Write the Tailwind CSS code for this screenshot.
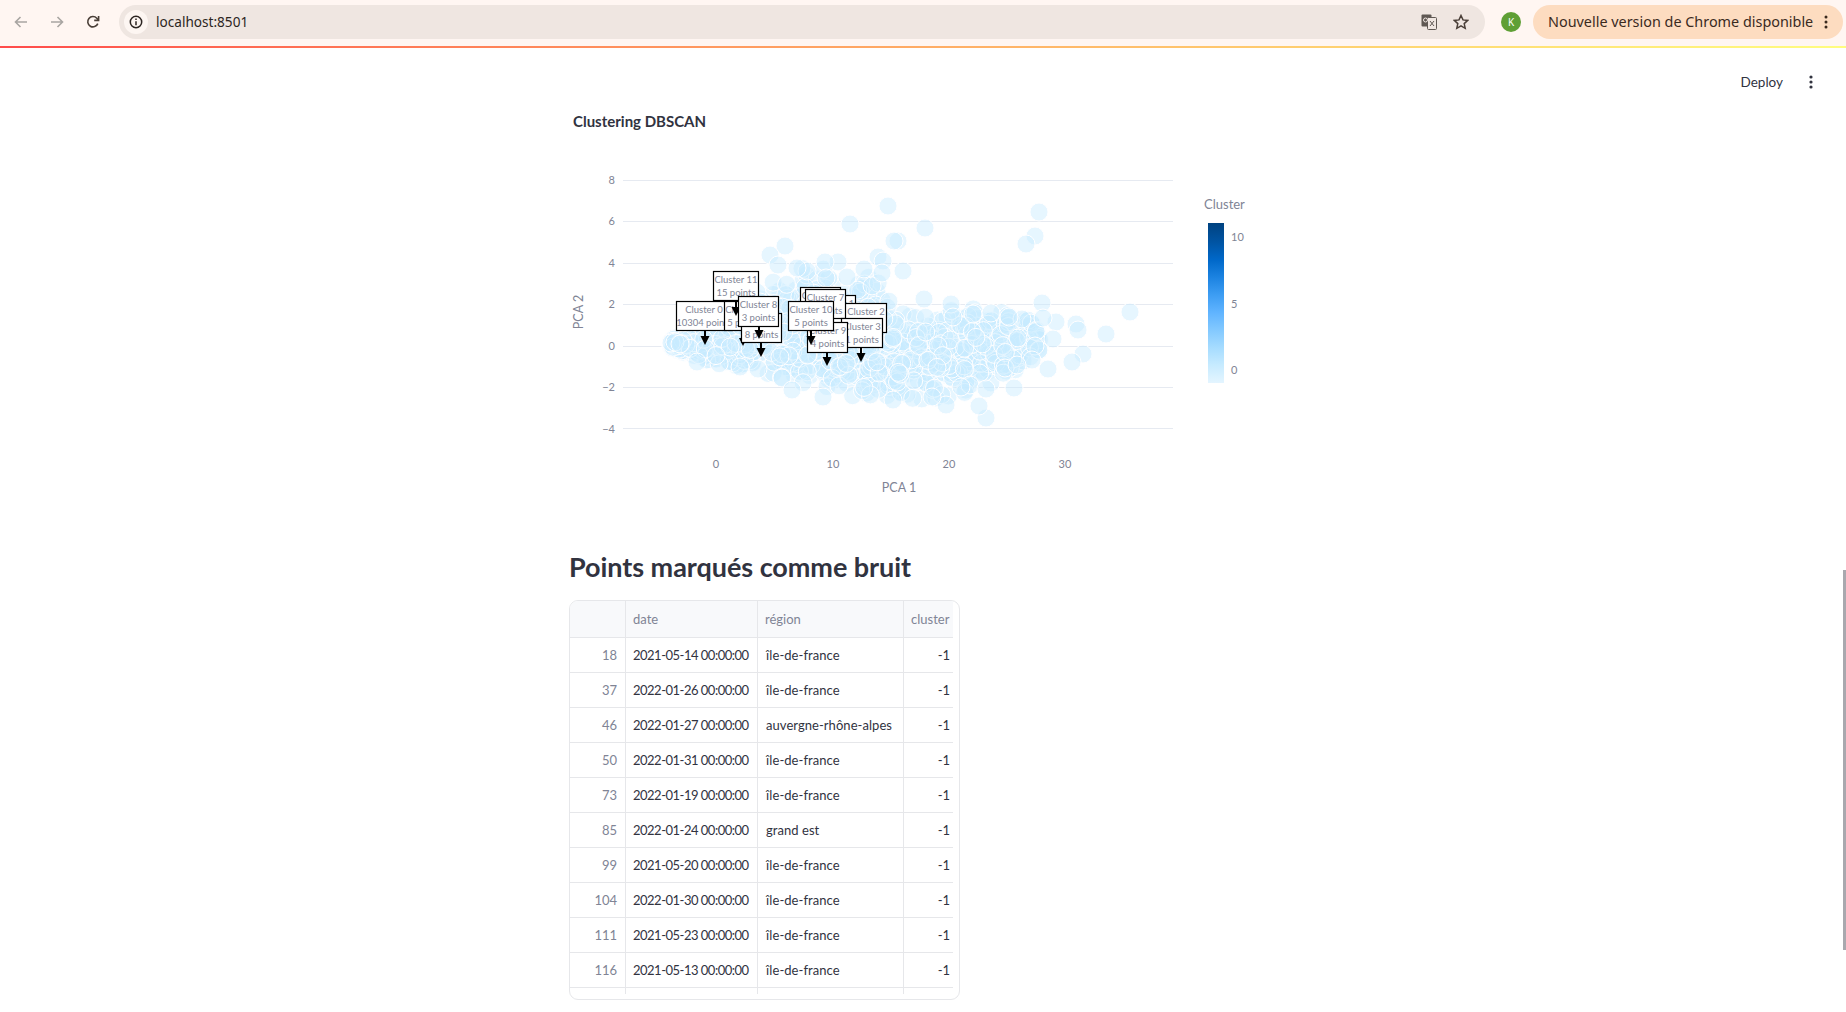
<!DOCTYPE html>
<html lang="fr">
<head>
    <meta charset="UTF-8">
    <title>localhost:8501</title>
    <script src="https://cdn.jsdelivr.net/npm/@tailwindcss/browser@4"></script>
</head>
<body class="bg-white h-screen overflow-hidden relative font-['Lato',sans-serif] text-[#31333f]">
    <!-- Browser toolbar -->
    <div class="h-[46px] bg-[#fff6f2] flex items-start pt-[5px] font-['Noto_Sans',sans-serif]">
        <div class="w-[119px] h-[34px] flex items-center shrink-0">
            <svg class="ml-[14px] w-[14px] h-[12px]" viewBox="0 0 14 12" fill="none" stroke="#a9a5a2" stroke-width="1.6"><path d="M13 6H2M6.5 1 1.5 6l5 5"/></svg>
            <svg class="ml-[22px] w-[14px] h-[12px]" viewBox="0 0 14 12" fill="none" stroke="#a9a5a2" stroke-width="1.6"><path d="M1 6h11M7.5 1l5 5-5 5"/></svg>
            <svg class="ml-[22px] w-[14px] h-[14px]" viewBox="0 0 14 14" fill="none" stroke="#4a3f38" stroke-width="1.6"><path d="M11.8 8.6A5.2 5.2 0 1 1 10.8 3.2L12.4 5"/><path d="M12.6 1v4.4H8.2" /></svg>
        </div>
        <div class="w-[1366px] h-[34px] bg-[#efe6e1] rounded-full flex items-center shrink-0">
            <div class="ml-[5px] w-[24px] h-[24px] rounded-full bg-[#fdf6f2] flex items-center justify-center">
                <svg class="w-[14px] h-[14px]" viewBox="0 0 14 14" fill="none" stroke="#2c2522" stroke-width="1.5"><circle cx="7" cy="7" r="5.7"/><path d="M7 6.2v4M7 3.6v1.4"/></svg>
            </div>
            <span class="ml-[8px] text-[13.6px] text-[#2c2522] leading-[32px] -mt-[1px]">localhost:8501</span>
            <div class="ml-auto flex items-center gap-[16px] mr-[16px]">
                <svg class="w-[16px] h-[16px]" viewBox="0 0 16 16"><rect x="0.5" y="0.5" width="10" height="12" rx="1" fill="#5f5853"/><rect x="6.5" y="3.5" width="9" height="12" rx="1" fill="#efe6e1" stroke="#5f5853"/><path d="M9 7l4 5M13 7l-4 5" stroke="#5f5853" fill="none"/><circle cx="4.5" cy="6" r="2" fill="none" stroke="#efe6e1"/></svg>
                <svg class="w-[16px] h-[16px]" viewBox="0 0 16 16" fill="none" stroke="#4a3f38" stroke-width="1.5"><path d="M8 1.5l2 4.4 4.7.5-3.5 3.2 1 4.7L8 11.9 3.8 14.3l1-4.7L1.300 6.400l4.700-.5z"/></svg>
            </div>
        </div>
        <div class="ml-[16px] mt-[7px] w-[20px] h-[20px] rounded-full bg-[#5f9f35] text-white text-[10px] flex items-center justify-center shrink-0">K</div>
        <div class="ml-[12px] w-[310px] h-[34px] bg-[#fddcc0] rounded-full flex items-center pl-[15px] shrink-0">
            <span class="text-[14.4px] text-[#3a2a1e] whitespace-nowrap">Nouvelle version de Chrome disponible</span>
            <svg class="ml-auto mr-[15px] w-[4px] h-[14px]" viewBox="0 0 4 14" fill="#3a2a1e"><circle cx="2" cy="2" r="1.500"/><circle cx="2" cy="7" r="1.500"/><circle cx="2" cy="12" r="1.500"/></svg>
        </div>
    </div>
    <div class="h-[2px] bg-gradient-to-r from-[#ff4b4b] to-[#fffd80]"></div>

    <!-- Streamlit header -->
    <div class="h-[44px] flex items-center justify-end pr-[33px] pt-[24px]">
        <span class="text-[13.5px]">Deploy</span>
        <svg class="ml-[26px] w-[4px] h-[14px]" viewBox="0 0 4 14" fill="#31333f"><circle cx="2" cy="2" r="1.600"/><circle cx="2" cy="7" r="1.600"/><circle cx="2" cy="12" r="1.600"/></svg>
    </div>

    <main class="ml-[569px] w-[720px]">
        <div class="mt-[19px] ml-[4px] text-[15px] font-bold leading-[20px]">Clustering DBSCAN</div>

        <!-- viewBox uses page coordinates so points read straight off the screenshot -->
        <svg id="chart" class="block w-[700px] h-[400px]" viewBox="569 131 700 400" font-family="Lato, sans-serif">
            <g stroke="#e6eaf1" stroke-width="1">
                <path d="M623 180.500H1173M623 221.500H1173M623 263.500H1173M623 304.500H1173M623 346.500H1173M623 387.500H1173M623 428.500H1173"/>
            </g>
            <g fill="#808495" font-size="11" text-anchor="end">
                <text x="615" y="184">8</text>
                <text x="615" y="225">6</text>
                <text x="615" y="267">4</text>
                <text x="615" y="308">2</text>
                <text x="615" y="350">0</text>
                <text x="615" y="391">−2</text>
                <text x="615" y="433">−4</text>
            </g>
            <g fill="#808495" font-size="11" text-anchor="middle">
                <text x="716" y="468">0</text>
                <text x="833" y="468">10</text>
                <text x="949" y="468">20</text>
                <text x="1065" y="468">30</text>
            </g>
            <text x="899" y="492" fill="#808495" font-size="12.500" text-anchor="middle">PCA 1</text>
            <text transform="translate(583 312) rotate(-90)" fill="#808495" font-size="12.500" text-anchor="middle">PCA 2</text>

            <g id="points" fill="#c7ebff" fill-opacity="0.45" stroke="#ffffff" stroke-width="1"></g>

            <!-- cluster annotations, back to front -->
            <g font-size="9.500" fill="#808495" text-anchor="middle">
                <g>
                    <path d="M705 330v8" stroke="#000" stroke-width="2"/><path d="M700.500 336h9l-4.500 9z" fill="#000"/>
                    <rect x="676.500" y="301.500" width="56" height="29" fill="#fff" stroke="#000" stroke-width="1.200"/>
                    <text x="704" y="313">Cluster 0</text><text x="704" y="326">10304 points</text>
                </g>
                <g>
                    <path d="M743 330v8" stroke="#000" stroke-width="2"/><path d="M739 338h8l-4 8z" fill="#000"/>
                    <rect x="724.500" y="301.500" width="40" height="29" fill="#fff" stroke="#000" stroke-width="1.200"/>
                    <text x="744" y="313">Cluster 5</text><text x="744" y="326">5 points</text>
                </g>
                <g>
                    <path d="M761 342v8" stroke="#000" stroke-width="2"/><path d="M756.500 348h9l-4.500 9z" fill="#000"/>
                    <rect x="741.500" y="313.500" width="40" height="29" fill="#fff" stroke="#000" stroke-width="1.200"/>
                    <text x="761.500" y="338">8 points</text>
                </g>
                <g>
                    <path d="M736 301v8" stroke="#000" stroke-width="2"/><path d="M731.500 307h9l-4.500 9z" fill="#000"/>
                    <rect x="713.500" y="271.500" width="45" height="29" fill="#fff" stroke="#000" stroke-width="1.200"/>
                    <text x="736" y="283">Cluster 11</text><text x="736" y="296">15 points</text>
                </g>
                <g>
                    <path d="M759 326v6" stroke="#000" stroke-width="2"/><path d="M754.500 330h9l-4.500 9z" fill="#000"/>
                    <rect x="738.500" y="296.500" width="40" height="30" fill="#fff" stroke="#000" stroke-width="1.200"/>
                    <text x="758.500" y="308">Cluster 8</text><text x="758.500" y="321">3 points</text>
                </g>
                <g>
                    <rect x="800.500" y="287.500" width="40" height="29" fill="#fff" stroke="#000" stroke-width="1.200"/>
                    <text x="820.500" y="299">Cluster 6</text>
                    <rect x="815.500" y="295.500" width="40" height="29" fill="#fff" stroke="#000" stroke-width="1.200"/>
                    <text x="835.500" y="307">Cluster 1</text>
                </g>
                <g>
                    <rect x="842.500" y="303.500" width="44" height="29" fill="#fff" stroke="#000" stroke-width="1.200"/>
                    <text x="866" y="315">Cluster 2</text><text x="866" y="328">2 points</text>
                </g>
                <g>
                    <rect x="805.500" y="289.500" width="40" height="29" fill="#fff" stroke="#000" stroke-width="1.200"/>
                    <text x="825.500" y="301">Cluster 7</text><text x="825.500" y="314">3 points</text>
                </g>
                <g>
                    <path d="M861 347v8" stroke="#000" stroke-width="2"/><path d="M856.500 353h9l-4.500 9z" fill="#000"/>
                    <rect x="841.500" y="318.500" width="41" height="29" fill="#fff" stroke="#000" stroke-width="1.200"/>
                    <text x="862" y="330">Cluster 3</text><text x="862" y="343">1 points</text>
                </g>
                <g>
                    <path d="M827 352v7" stroke="#000" stroke-width="2"/><path d="M822.500 357h9l-4.500 9z" fill="#000"/>
                    <rect x="807.500" y="322.500" width="40" height="30" fill="#fff" stroke="#000" stroke-width="1.200"/>
                    <text x="827.500" y="334">Cluster 9</text><text x="827.500" y="347">4 points</text>
                </g>
                <g>
                    <path d="M811 330v8" stroke="#000" stroke-width="2"/><path d="M806.500 336h9l-4.500 9z" fill="#000"/>
                    <rect x="788.500" y="301.500" width="45" height="29" fill="#fff" stroke="#000" stroke-width="1.200"/>
                    <text x="811" y="313">Cluster 10</text><text x="811" y="326">5 points</text>
                </g>
            </g>

            <!-- legend -->
            <defs>
                <linearGradient id="blues" x1="0" y1="1" x2="0" y2="0">
                    <stop offset="0" stop-color="#e4f5ff"/><stop offset="0.11" stop-color="#c7ebff"/><stop offset="0.22" stop-color="#a6dcff"/>
                    <stop offset="0.33" stop-color="#83c9ff"/><stop offset="0.44" stop-color="#60b4ff"/><stop offset="0.55" stop-color="#3d9df3"/>
                    <stop offset="0.66" stop-color="#1c83e1"/><stop offset="0.77" stop-color="#0068c9"/><stop offset="0.88" stop-color="#0054a3"/>
                    <stop offset="1" stop-color="#004280"/>
                </linearGradient>
            </defs>
            <text x="1204" y="209" fill="#808495" font-size="13">Cluster</text>
            <rect x="1208" y="223" width="16" height="160" fill="url(#blues)"/>
            <g fill="#808495" font-size="11">
                <text x="1231" y="241">10</text>
                <text x="1231" y="308">5</text>
                <text x="1231" y="374">0</text>
            </g>
        </svg>

        <h2 class="mt-[18px] text-[27px] font-bold leading-[36px] whitespace-nowrap tracking-[-0.05px]">Points marqués comme bruit</h2>

        <!-- Dataframe -->
        <div class="mt-[15px] w-[391px] h-[400px] border border-[#e6e7ea] rounded-[9px] overflow-hidden text-[13px] leading-[34px]">
            <div class="w-[383px] h-[393px] overflow-hidden">
                <div class="grid grid-cols-[56px_132px_146px_49px] h-[37px] leading-[36px] bg-[#f8f9fb] text-[#808495] border-b border-[#e6e7ea]">
                    <div class="border-r border-[#e6e7ea]"></div>
                    <div class="border-r border-[#e6e7ea] pl-[7px]">date</div>
                    <div class="border-r border-[#e6e7ea] pl-[7px]">région</div>
                    <div class="pl-[7px] whitespace-nowrap overflow-hidden">cluster</div>
                </div>
                <div id="rows"></div>
                <div class="grid grid-cols-[56px_132px_146px_49px] h-[6px]">
                    <div class="border-r border-[#e6e7ea]"></div>
                    <div class="border-r border-[#e6e7ea]"></div>
                    <div class="border-r border-[#e6e7ea]"></div>
                </div>
            </div>
        </div>
    </main>

    <!-- Scrollbar thumb -->
    <div class="absolute right-0 top-[570px] w-[3px] h-[380px] bg-[#a9a8ae]"></div>

    <script>
        const rows = [
            [18, '2021-05-14 00:00:00', 'île-de-france'],
            [37, '2022-01-26 00:00:00', 'île-de-france'],
            [46, '2022-01-27 00:00:00', 'auvergne-rhône-alpes'],
            [50, '2022-01-31 00:00:00', 'île-de-france'],
            [73, '2022-01-19 00:00:00', 'île-de-france'],
            [85, '2022-01-24 00:00:00', 'grand est'],
            [99, '2021-05-20 00:00:00', 'île-de-france'],
            [104, '2022-01-30 00:00:00', 'île-de-france'],
            [111, '2021-05-23 00:00:00', 'île-de-france'],
            [116, '2021-05-13 00:00:00', 'île-de-france'],
        ];
        document.getElementById('rows').innerHTML = rows.map(r => `
            <div class="grid grid-cols-[56px_132px_146px_49px] h-[35px] border-b border-[#e6e7ea]">
                <div class="border-r border-[#e6e7ea] pr-[8px] text-right text-[#808495]">${r[0]}</div>
                <div class="border-r border-[#e6e7ea] pl-[7px] whitespace-nowrap tracking-[-0.5px]">${r[1]}</div>
                <div class="border-r border-[#e6e7ea] pl-[8px] whitespace-nowrap tracking-[0.05px]">${r[2]}</div>
                <div class="pr-[3px] text-right">-1</div>
            </div>`).join('');

        // Scatter: dense cloud from a seeded generator, then the stray points read off the reference
        let seed = 12345;
        const rand = () => (seed = (seed * 16807) % 2147483647) / 2147483647;
        const lerp = (t, x) => {
            for (let i = 1; i < t.length; i++) {
                if (x <= t[i][0]) return t[i-1][1] + (t[i][1] - t[i-1][1]) * (x - t[i-1][0]) / (t[i][0] - t[i-1][0]);
            }
            return t[t.length-1][1];
        };
        const upper = [[671,338],[700,330],[740,298],[770,272],[800,264],[860,268],[885,282],[900,302],[960,306],[1040,312]];
        const lower = [[671,348],[700,360],[740,370],[780,382],[830,398],[900,405],[960,398],[1000,385],[1040,358]];
        const pts = [];
        for (let i = 0; i < 1300; i++) {
            const x = 671 + 369 * Math.pow(rand(), 1.4);
            const v = Math.pow((rand() + rand()) / 2, x < 800 ? 0.75 : 1);
            pts.push([x, lerp(upper, x) + (lerp(lower, x) - lerp(upper, x)) * v]);
        }
        pts.push([671,343],[675,342],[680,344],[697,362],[740,367],[758,369],[782,378],[792,390],[823,397],[893,400]);
        pts.push([1039,212],[1035,236],[1026,244],[925,228],[903,271],[898,241],[888,206],[850,224],[894,241],[785,246],[770,255],[778,265],[878,257],[883,261],[882,273],[864,269],[838,262],[825,262],[826,278],[807,271],[797,268],[847,277]);
        pts.push([1130,312],[1106,334],[1083,354],[1072,362],[1076,324],[1078,330],[1048,369],[1014,388],[986,418],[979,406],[946,405],[932,397],[1042,303],[951,304],[924,299],[1056,322],[1053,339],[1035,346],[1043,318],[1022,319],[1009,317],[991,313],[973,314],[953,317],[1018,338],[1005,368],[1032,360],[1017,365],[970,385],[961,387],[986,389]);
        document.getElementById('points').innerHTML = pts.map(p => `<circle cx="${p[0].toFixed(1)}" cy="${p[1].toFixed(1)}" r="9"/>`).join('');
    </script>
</body>
</html>
